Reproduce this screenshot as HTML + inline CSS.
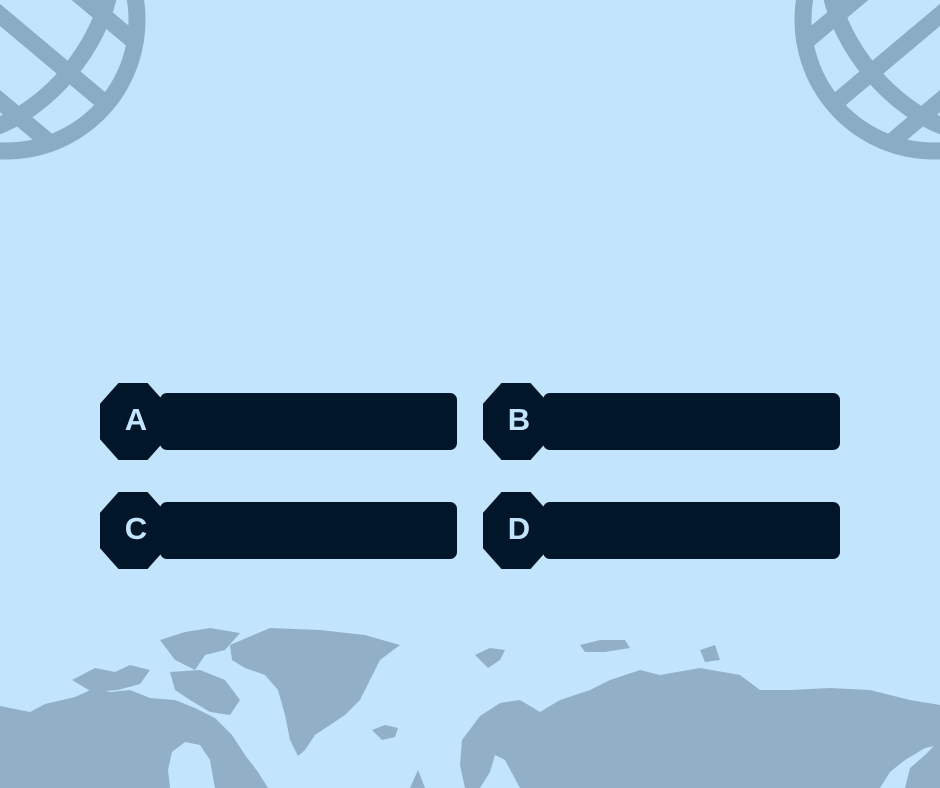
<!DOCTYPE html>
<html><head><style>
html,body{margin:0;padding:0}
body{width:940px;height:788px;background:#c2e5fd;position:relative;overflow:hidden;font-family:"Liberation Sans",sans-serif}
svg{position:absolute;left:0;top:0}
.bar{position:absolute;height:57px;width:297px;background:#011628;border-radius:7px}
.oct{position:absolute;width:66px;height:77px;background:#011628;clip-path:polygon(28% 0,72% 0,100% 27%,100% 73%,72% 100%,28% 100%,0 73%,0 27%);color:#c2e5fd;font-weight:bold;font-size:31px;line-height:74px;text-align:center;box-sizing:border-box;padding-left:6px}
</style></head><body>
<svg width="940" height="788" viewBox="0 0 940 788">
 <defs>
  <clipPath id="gc"><circle r="132"/></clipPath>
  <g id="globe">
   <circle r="131" fill="none"/>
   <g clip-path="url(#gc)" fill="none">
    <ellipse rx="82" ry="132"/>
    <line x1="-140" y1="0" x2="140" y2="0"/>
    <line x1="-140" y1="66" x2="140" y2="66"/>
    <line x1="-140" y1="-66" x2="140" y2="-66"/>
   </g>
  </g>
 </defs>
 <g stroke="#8aacc4" stroke-width="17">
  <g transform="translate(6,20) rotate(40)"><use href="#globe"/></g>
  <g transform="translate(934,20) scale(-1,1) rotate(40)"><use href="#globe"/></g>
 </g>
 <g fill="#91b0c8">
  <path d="M0,706 L30,712 L45,704 L75,697 L95,688 L110,692 L130,690 L150,698 L175,700 L195,708 L215,718 L232,735 L245,755 L258,772 L268,788 L215,788 L210,760 L200,745 L185,742 L172,752 L168,770 L170,788 L0,788Z"/>
  <path d="M72,680 L95,668 L115,672 L130,665 L150,670 L140,684 L118,690 L92,692Z"/>
  <path d="M160,640 L185,632 L210,628 L240,633 L225,650 L205,655 L195,670 L175,660Z"/>
  <path d="M170,672 L200,670 L225,680 L240,700 L230,715 L210,712 L190,700 L175,690Z"/>
  <path d="M230,645 L270,628 L320,630 L365,635 L400,645 L380,660 L370,680 L360,700 L345,715 L330,725 L315,735 L305,750 L298,756 L290,740 L285,715 L278,690 L265,675 L245,668 L232,660Z"/>
  <path d="M372,730 L385,725 L398,728 L395,737 L382,740Z"/>
  <path d="M475,655 L490,648 L505,650 L500,660 L488,668Z"/>
  <path d="M580,645 L600,640 L625,640 L630,648 L605,652 L585,652Z"/>
  <path d="M462,740 L480,716 L500,703 L520,700 L540,712 L560,700 L590,690 L610,680 L640,670 L660,675 L700,668 L740,675 L760,690 L790,690 L830,688 L870,690 L910,700 L940,705 L940,745 L925,748 L905,760 L890,772 L880,788 L520,788 L505,760 L495,755 L490,772 L480,788 L465,788 L460,765Z"/>
  <path d="M605,700 L625,680 L640,678 L620,700Z"/>
  <path d="M700,650 L715,645 L720,660 L705,662Z"/>
  <path d="M910,768 L925,755 L935,745 L940,745 L940,788 L905,788Z"/>
  <path d="M410,788 L418,770 L425,788Z"/>
 </g>
</svg>
<div class="bar" style="left:160px;top:393px"></div>
<div class="oct" style="left:100px;top:383px">A</div>
<div class="bar" style="left:543px;top:393px"></div>
<div class="oct" style="left:483px;top:383px">B</div>
<div class="bar" style="left:160px;top:502px"></div>
<div class="oct" style="left:100px;top:492px">C</div>
<div class="bar" style="left:543px;top:502px"></div>
<div class="oct" style="left:483px;top:492px">D</div>
</body></html>
